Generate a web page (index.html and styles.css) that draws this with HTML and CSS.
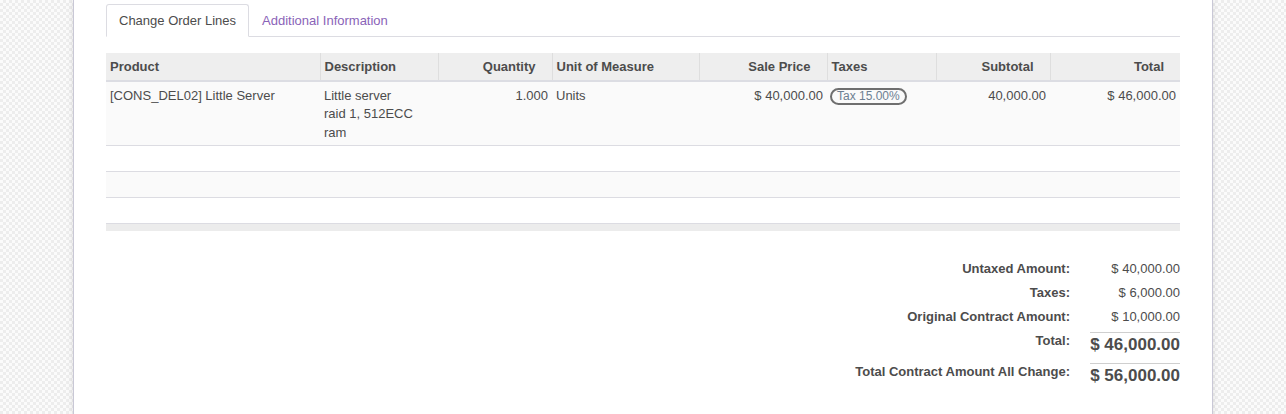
FILE: index.html
```html
<!DOCTYPE html>
<html>
<head>
<meta charset="utf-8">
<link rel="stylesheet" href="styles.css">
</head>
<body>
<div class="sheet">
  <ul class="tabs">
    <li class="tab active">Change Order Lines</li>
    <li class="tab link">Additional Information</li>
  </ul>
  <table class="lines">
    <colgroup>
      <col style="width:214px"><col style="width:118px"><col style="width:114px"><col style="width:147px">
      <col style="width:128px"><col style="width:109px"><col style="width:114px"><col style="width:130px">
    </colgroup>
    <thead>
      <tr>
        <th>Product</th>
        <th>Description</th>
        <th class="num">Quantity</th>
        <th>Unit of Measure</th>
        <th class="num">Sale Price</th>
        <th>Taxes</th>
        <th class="num">Subtotal</th>
        <th class="num">Total</th>
      </tr>
    </thead>
    <tbody>
      <tr>
        <td>[CONS_DEL02] Little Server</td>
        <td>Little server<br>raid 1, 512ECC ram</td>
        <td class="num">1.000</td>
        <td>Units</td>
        <td class="num">$ 40,000.00</td>
        <td><span class="badge">Tax 15.00%</span></td>
        <td class="num">40,000.00</td>
        <td class="num">$ 46,000.00</td>
      </tr>
      <tr class="empty"><td></td><td></td><td></td><td></td><td></td><td></td><td></td><td></td></tr>
      <tr class="empty"><td></td><td></td><td></td><td></td><td></td><td></td><td></td><td></td></tr>
      <tr class="empty"><td></td><td></td><td></td><td></td><td></td><td></td><td></td><td></td></tr>
    </tbody>
    <tfoot>
      <tr><td></td><td></td><td></td><td></td><td></td><td></td><td></td><td></td></tr>
    </tfoot>
  </table>
  <div class="totals">
    <div class="label">Untaxed Amount:</div><div class="value">$ 40,000.00</div>
    <div class="label">Taxes:</div><div class="value">$ 6,000.00</div>
    <div class="label">Original Contract Amount:</div><div class="value">$ 10,000.00</div>
    <div class="label big-label first">Total:</div><div class="value big first">$ 46,000.00</div>
    <div class="label big-label">Total Contract Amount All Change:</div><div class="value big">$ 56,000.00</div>
  </div>
</div>
</body>
</html>
```
FILE: styles.css
```css
html, body {
  margin: 0;
  height: 100%;
  overflow: hidden;
}
body {
  font-family: "Liberation Sans", Arial, sans-serif;
  font-size: 13px;
  line-height: 1.42857;
  color: #4c4c4c;
  background-color: #f7f7f7;
  background-image: conic-gradient(#ededed 25%, #fbfbfb 0 50%, #ededed 0 75%, #fbfbfb 0);
  background-size: 6px 6px;
}
.sheet {
  box-sizing: border-box;
  width: 1140px;
  min-height: 100%;
  margin: 0 auto;
  padding: 4px 32px 0 32px;
  background: #fff;
  border-left: 1px solid #c9c8d6;
  border-right: 1px solid #c9c8d6;
  box-shadow: 0 0 6px rgba(0, 0, 0, 0.12);
}
.tabs {
  display: flex;
  list-style: none;
  margin: 0;
  padding: 0;
  height: 32px;
  border-bottom: 1px solid #dcdce2;
}
.tab {
  box-sizing: border-box;
  height: 33px;
  padding: 0 12px;
  line-height: 31px;
  border: 1px solid transparent;
  border-radius: 3px 3px 0 0;
}
.tab.active {
  border-color: #dcdce2;
  border-bottom-color: #fff;
  background: #fff;
  color: #4c4c4c;
}
.tab.link {
  color: #8a63b8;
}
.lines {
  width: 1074px;
  margin-top: 16px;
  border-collapse: collapse;
  table-layout: fixed;
}
.lines th {
  background: #eeeeee;
  font-weight: bold;
  text-align: left;
  padding: 5px 4px 3px 4px;
  border-left: 1px solid #dedede;
  border-bottom: 2px solid #dcdde3;
  white-space: nowrap;
}
.lines th:first-child {
  border-left: none;
}
.lines th.num {
  text-align: right;
  padding-right: 16px;
}
.lines td {
  padding: 5px 4px 3px 4px;
  vertical-align: top;
  border-top: 1px solid #dcdce2;
}
.lines td.num {
  text-align: right;
}
.lines tbody tr:nth-child(odd) td {
  background: #fafafa;
}
.lines tr.empty {
  height: 26px;
}
.lines tr.empty td {
  padding: 0;
}
.lines tfoot td {
  background: #ececec;
  height: 7px;
  padding: 0;
  border-top: 1px solid #dcdce2;
}
.badge {
  display: inline-block;
  box-sizing: border-box;
  height: 17px;
  padding: 0 5px;
  margin-left: -1px;
  border: 2px solid #6f6f6f;
  border-radius: 9px;
  font-size: 12px;
  line-height: 13px;
  color: #6d7f92;
}
.totals {
  display: grid;
  grid-template-columns: auto 90px;
  column-gap: 20px;
  justify-content: end;
  align-items: start;
  margin-top: 26px;
}
.totals .label {
  font-weight: bold;
  text-align: right;
  line-height: 24px;
}
.totals .value {
  text-align: right;
  line-height: 24px;
}
.totals .big-label {
  line-height: 18.57px;
}
.totals .big-label.first {
  padding-top: 3px;
}
.totals .value.big {
  font-size: 17px;
  font-weight: bold;
  border-top: 1px solid #cfcfcf;
  padding-bottom: 6px;
}
.totals .value.big.first {
  margin-top: 3px;
}
```
